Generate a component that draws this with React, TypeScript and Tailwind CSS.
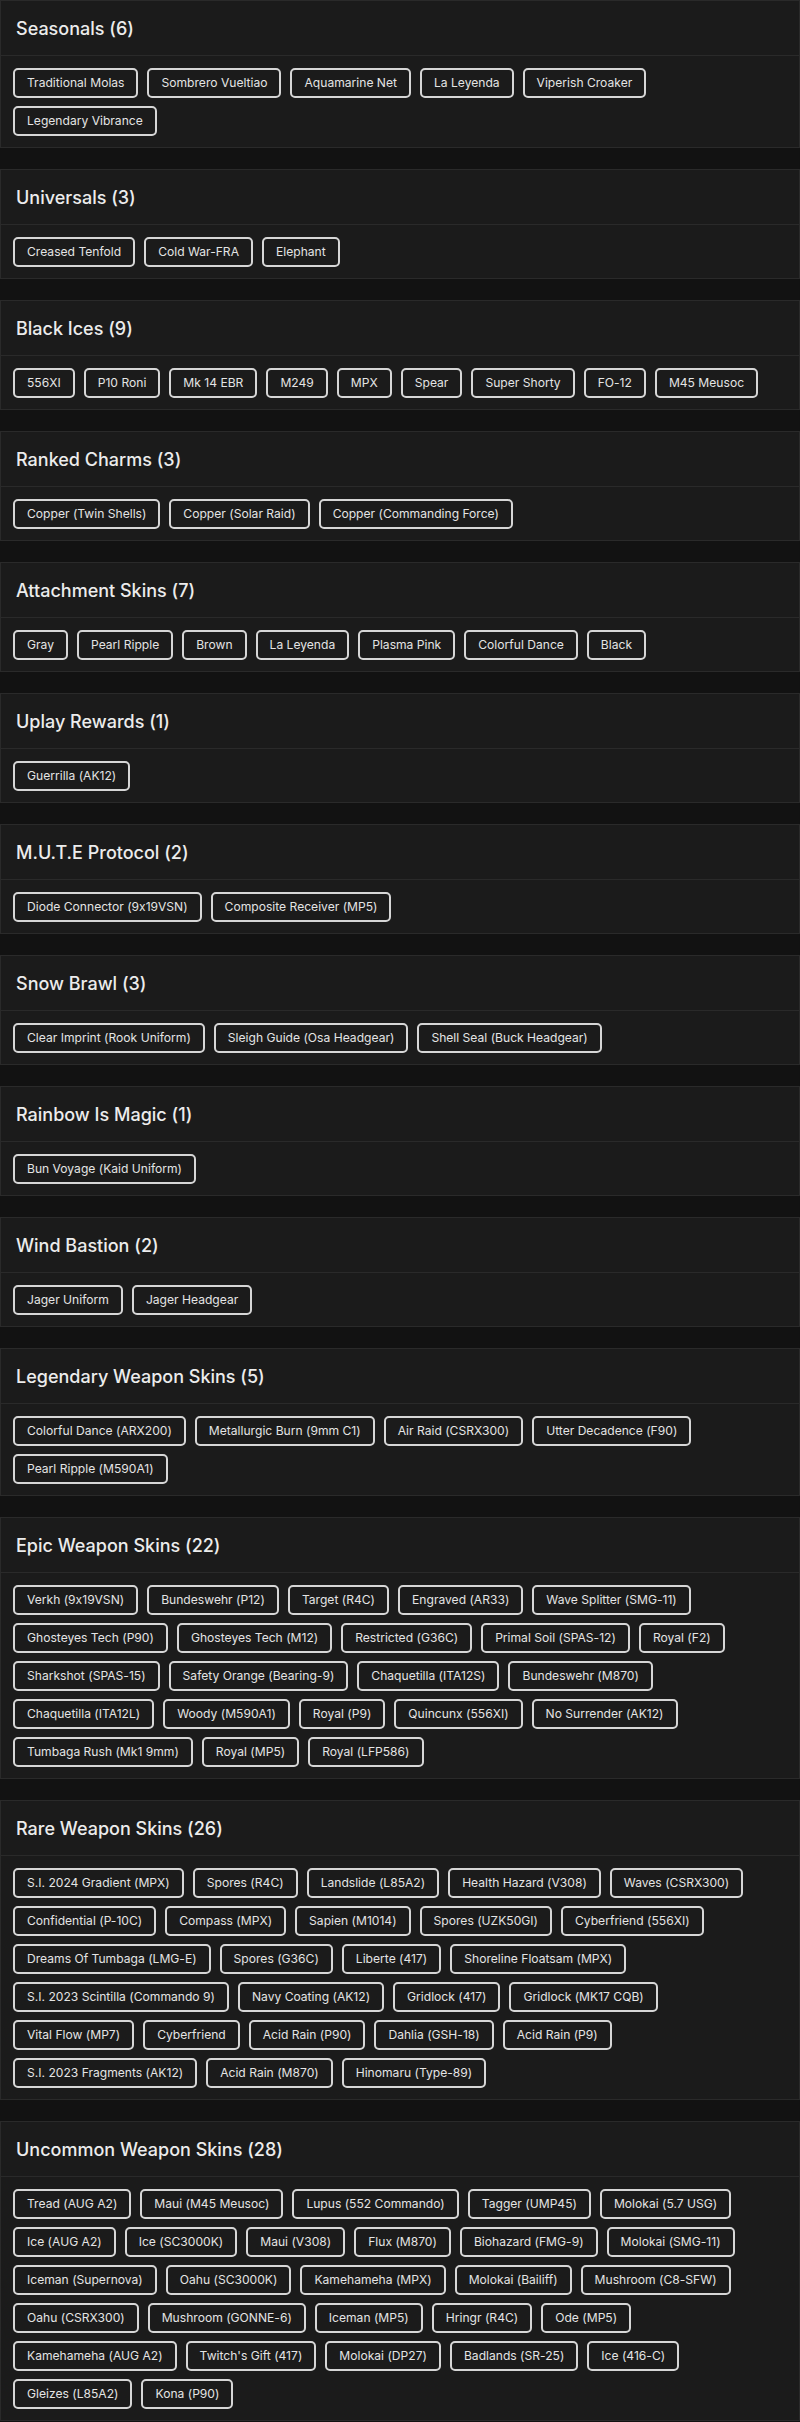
const sections: { title: string; rows: string[][] }[] = [
  {
    title: 'Seasonals (6)',
    rows: [
      ['Traditional Molas', 'Sombrero Vueltiao', 'Aquamarine Net', 'La Leyenda', 'Viperish Croaker'],
      ['Legendary Vibrance'],
    ],
  },
  { title: 'Universals (3)', rows: [['Creased Tenfold', 'Cold War-FRA', 'Elephant']] },
  {
    title: 'Black Ices (9)',
    rows: [['556XI', 'P10 Roni', 'Mk 14 EBR', 'M249', 'MPX', 'Spear', 'Super Shorty', 'FO-12', 'M45 Meusoc']],
  },
  {
    title: 'Ranked Charms (3)',
    rows: [['Copper (Twin Shells)', 'Copper (Solar Raid)', 'Copper (Commanding Force)']],
  },
  {
    title: 'Attachment Skins (7)',
    rows: [['Gray', 'Pearl Ripple', 'Brown', 'La Leyenda', 'Plasma Pink', 'Colorful Dance', 'Black']],
  },
  { title: 'Uplay Rewards (1)', rows: [['Guerrilla (AK12)']] },
  { title: 'M.U.T.E Protocol (2)', rows: [['Diode Connector (9x19VSN)', 'Composite Receiver (MP5)']] },
  {
    title: 'Snow Brawl (3)',
    rows: [['Clear Imprint (Rook Uniform)', 'Sleigh Guide (Osa Headgear)', 'Shell Seal (Buck Headgear)']],
  },
  { title: 'Rainbow Is Magic (1)', rows: [['Bun Voyage (Kaid Uniform)']] },
  { title: 'Wind Bastion (2)', rows: [['Jager Uniform', 'Jager Headgear']] },
  {
    title: 'Legendary Weapon Skins (5)',
    rows: [
      ['Colorful Dance (ARX200)', 'Metallurgic Burn (9mm C1)', 'Air Raid (CSRX300)', 'Utter Decadence (F90)'],
      ['Pearl Ripple (M590A1)'],
    ],
  },
  {
    title: 'Epic Weapon Skins (22)',
    rows: [
      ['Verkh (9x19VSN)', 'Bundeswehr (P12)', 'Target (R4C)', 'Engraved (AR33)', 'Wave Splitter (SMG-11)'],
      ['Ghosteyes Tech (P90)', 'Ghosteyes Tech (M12)', 'Restricted (G36C)', 'Primal Soil (SPAS-12)', 'Royal (F2)'],
      ['Sharkshot (SPAS-15)', 'Safety Orange (Bearing-9)', 'Chaquetilla (ITA12S)', 'Bundeswehr (M870)'],
      ['Chaquetilla (ITA12L)', 'Woody (M590A1)', 'Royal (P9)', 'Quincunx (556XI)', 'No Surrender (AK12)'],
      ['Tumbaga Rush (Mk1 9mm)', 'Royal (MP5)', 'Royal (LFP586)'],
    ],
  },
  {
    title: 'Rare Weapon Skins (26)',
    rows: [
      ['S.I. 2024 Gradient (MPX)', 'Spores (R4C)', 'Landslide (L85A2)', 'Health Hazard (V308)', 'Waves (CSRX300)'],
      ['Confidential (P-10C)', 'Compass (MPX)', 'Sapien (M1014)', 'Spores (UZK50GI)', 'Cyberfriend (556XI)'],
      ['Dreams Of Tumbaga (LMG-E)', 'Spores (G36C)', 'Liberte (417)', 'Shoreline Floatsam (MPX)'],
      ['S.I. 2023 Scintilla (Commando 9)', 'Navy Coating (AK12)', 'Gridlock (417)', 'Gridlock (MK17 CQB)'],
      ['Vital Flow (MP7)', 'Cyberfriend', 'Acid Rain (P90)', 'Dahlia (GSH-18)', 'Acid Rain (P9)'],
      ['S.I. 2023 Fragments (AK12)', 'Acid Rain (M870)', 'Hinomaru (Type-89)'],
    ],
  },
  {
    title: 'Uncommon Weapon Skins (28)',
    rows: [
      ['Tread (AUG A2)', 'Maui (M45 Meusoc)', 'Lupus (552 Commando)', 'Tagger (UMP45)', 'Molokai (5.7 USG)'],
      ['Ice (AUG A2)', 'Ice (SC3000K)', 'Maui (V308)', 'Flux (M870)', 'Biohazard (FMG-9)', 'Molokai (SMG-11)'],
      ['Iceman (Supernova)', 'Oahu (SC3000K)', 'Kamehameha (MPX)', 'Molokai (Bailiff)', 'Mushroom (C8-SFW)'],
      ['Oahu (CSRX300)', 'Mushroom (GONNE-6)', 'Iceman (MP5)', 'Hringr (R4C)', 'Ode (MP5)'],
      ['Kamehameha (AUG A2)', "Twitch's Gift (417)", 'Molokai (DP27)', 'Badlands (SR-25)', 'Ice (416-C)'],
      ['Gleizes (L85A2)', 'Kona (P90)'],
    ],
  },
];

function Chip({ label }: { label: string }) {
  return (
    <span className="flex h-[30px] items-center rounded-[5px] border-2 border-[#d6d6d6] px-3 text-[12.1px] whitespace-nowrap text-[#e4e4e4]">
      {label}
    </span>
  );
}

function Section({ title, rows }: { title: string; rows: string[][] }) {
  return (
    <section className="border border-[#2a2a2a] bg-[#1b1b1b]">
      {/* Header */}
      <div className="flex h-[55px] items-center border-b border-[#2a2a2a] px-[15px]">
        <h2 className="text-[18px] font-medium text-[#ececec]">{title}</h2>
      </div>

      {/* Items */}
      <div className="flex flex-col gap-2 px-3 pt-3 pb-[11px]">
        {rows.map((row, i) => (
          <div key={i} className="flex gap-[9px]">
            {row.map((label) => (
              <Chip key={label} label={label} />
            ))}
          </div>
        ))}
      </div>
    </section>
  );
}

export default function App() {
  return (
    <main className="flex min-h-screen flex-col gap-[21px] bg-[#121212] font-['Inter',sans-serif] [font-feature-settings:'calt'_0]">
      {sections.map((s) => (
        <Section key={s.title} title={s.title} rows={s.rows} />
      ))}
    </main>
  );
}
